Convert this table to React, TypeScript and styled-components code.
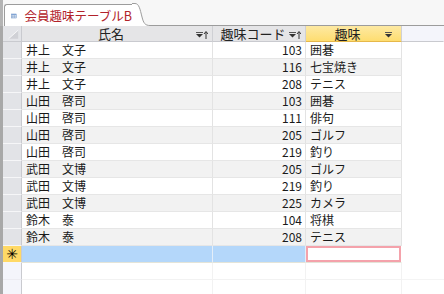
import React from 'react';
import styled, { createGlobalStyle } from 'styled-components';

const GlobalStyle = createGlobalStyle`
    html, body {
        margin: 0;
        padding: 0;
        background: #ffffff;
    }
    body {
        font-family: 'Noto Sans CJK JP', 'Noto Sans', sans-serif;
    }
`;

const Page = styled.div`
    width: 444px;
    height: 294px;
    overflow: hidden;
    display: flex;
    flex-direction: column;
    background: #ffffff;
`;

const TabBar = styled.div`
    display: flex;
    align-items: flex-end;
    height: 26px;
    flex-shrink: 0;
    background: #f7f7f7;
    border-left: 3px solid #b4b4b4;
    box-sizing: border-box;
`;

const Tab = styled.div`
    display: flex;
    align-items: center;
    gap: 8px;
    height: 22px;
    width: 128px;
    padding-left: 6px;
    box-sizing: border-box;
    background: #ffffff;
    border: 1px solid #9c9c9c;
    border-bottom: none;
    border-top-left-radius: 3px;
    border-right: none;
    margin-left: 1px;
`;

const TabLabel = styled.span`
    font-size: 12.5px;
    line-height: 14px;
    color: #b2232b;
    white-space: nowrap;
`;

const TabRest = styled.div`
    flex: 1;
    height: 1px;
    background: #9c9c9c;
`;

const Grid = styled.div`
    flex: 1;
    display: flex;
    flex-direction: column;
    border-left: 3px solid #a8a8a8;
`;

const Row = styled.div<{ $h?: number }>`
    display: grid;
    grid-template-columns: 19px 191px 93px 96px 1fr;
    height: ${(p) => p.$h ?? 17}px;
    flex-shrink: 0;
`;

type Tone = 'white' | 'alt' | 'blank';

const rowBg: Record<Tone, string> = {
    white: '#ffffff',
    alt: '#f2f2f2',
    blank: '#ffffff',
};

const Selector = styled.div<{ $kind: 'head' | 'data' | 'new' | 'blank' }>`
    box-sizing: border-box;
    display: flex;
    align-items: center;
    justify-content: center;
    border-right: 1px solid #c9cacf;
    border-bottom: 1px solid ${(p) => (p.$kind === 'head' ? '#c9cacf' : p.$kind === 'blank' ? '#ececf2' : '#f6f6f8')};
    background: ${(p) =>
        p.$kind === 'head' ? '#e3e4e8' : p.$kind === 'data' ? '#e2e3e7' : p.$kind === 'new' ? '#ffd966' : '#f4f5fb'};
    font-family: 'DejaVu Sans', sans-serif;
    font-size: 14px;
    font-weight: 700;
    line-height: 14px;
    color: #000;
`;

const HeadCell = styled.div<{ $active?: boolean; $empty?: boolean }>`
    box-sizing: border-box;
    position: relative;
    display: flex;
    align-items: center;
    justify-content: center;
    padding-right: 12px;
    font-size: 13px;
    line-height: 15px;
    color: #222;
    border-right: 1px solid ${(p) => (p.$empty ? 'transparent' : '#cfd0d4')};
    border-bottom: 1px solid ${(p) => (p.$active ? '#e6b84a' : '#c9cacf')};
    background: ${(p) =>
        p.$active
            ? 'linear-gradient(#fde9a3, #fedd70)'
            : p.$empty
            ? '#f4f5fb'
            : '#e5e5e7'};
`;

const HeadIcon = styled.svg`
    position: absolute;
    right: 4px;
    top: 5px;
`;

const Cell = styled.div<{ $tone: Tone; $num?: boolean }>`
    box-sizing: border-box;
    display: flex;
    align-items: center;
    justify-content: ${(p) => (p.$num ? 'flex-end' : 'flex-start')};
    padding: ${(p) => (p.$num ? '0 3px 0 0' : '0 0 0 4px')};
    font-size: 12px;
    line-height: 14px;
    color: #1a1a1a;
    white-space: nowrap;
    background: ${(p) => rowBg[p.$tone]};
    border-right: 1px solid ${(p) => (p.$tone === 'blank' ? '#f2f2f2' : '#e3e3e3')};
    border-bottom: 1px solid ${(p) => (p.$tone === 'blank' ? '#f2f2f2' : '#e6e6e6')};
`;

const TailCell = styled.div<{ $tone: Tone }>`
    background: #ffffff;
    border-bottom: 1px solid ${(p) => (p.$tone === 'blank' ? '#f4f4f4' : '#ffffff')};
`;

const NewCell = styled.div<{ $focus?: boolean }>`
    box-sizing: border-box;
    background: ${(p) => (p.$focus ? '#ffffff' : '#b4d7fa')};
    border-right: 1px solid ${(p) => (p.$focus ? 'transparent' : '#e4eef8')};
    border-bottom: 1px solid #e4e4d8;
    box-shadow: ${(p) => (p.$focus ? 'inset 0 0 0 2px #f4a2ab' : 'none')};
`;

const TableIcon = () => (
    <svg width="15" height="12" viewBox="0 0 15 12">
        <rect x="0.5" y="0.5" width="14" height="11" fill="#ffffff" stroke="#4a78b8" />
        <rect x="1" y="1" width="13" height="2.5" fill="#6f98cf" />
        <line x1="0.5" y1="6" x2="14.5" y2="6" stroke="#4a78b8" />
        <line x1="0.5" y1="8.8" x2="14.5" y2="8.8" stroke="#4a78b8" />
        <line x1="5" y1="3.5" x2="5" y2="11.5" stroke="#4a78b8" />
        <line x1="10" y1="3.5" x2="10" y2="11.5" stroke="#4a78b8" />
    </svg>
);

const TabCurve = () => (
    <svg width="18" height="23" viewBox="0 0 18 23" style={{ display: 'block' }}>
        <path d="M0 23 L0 0.5 L3 0.5 C7 0.5 8 6 10 14 C11.5 20 13 22.5 18 22.5 L18 23 Z" fill="#ffffff" />
        <path d="M0 0.5 L3 0.5 C7 0.5 8 6 10 14 C11.5 20 13 22.5 18 22.5" fill="none" stroke="#9c9c9c" />
    </svg>
);

const SortIcon = ({ sorted }: { sorted?: boolean }) => (
    <HeadIcon width="12" height="8" viewBox="0 0 12 8">
        <line x1="0" y1="1.5" x2="7" y2="1.5" stroke="#555" />
        <path d="M0 3 L7 3 L3.5 6.5 Z" fill="#333" />
        {sorted && (
            <>
                <line x1="10" y1="1" x2="10" y2="8" stroke="#333" />
                <path d="M8 3 L10 0.5 L12 3" fill="none" stroke="#333" />
            </>
        )}
    </HeadIcon>
);

const CornerMark = () => (
    <svg width="19" height="15" viewBox="0 0 19 15">
        <path d="M6 13 L16 4 L16 13 Z" fill="#d0d1d6" />
        <path d="M6 13 L16 4" stroke="#ffffff" strokeWidth="0.8" />
    </svg>
);

const rows: [string, number, string][] = [
    ['井上　文子', 103, '囲碁'],
    ['井上　文子', 116, '七宝焼き'],
    ['井上　文子', 208, 'テニス'],
    ['山田　啓司', 103, '囲碁'],
    ['山田　啓司', 111, '俳句'],
    ['山田　啓司', 205, 'ゴルフ'],
    ['山田　啓司', 219, '釣り'],
    ['武田　文博', 205, 'ゴルフ'],
    ['武田　文博', 219, '釣り'],
    ['武田　文博', 225, 'カメラ'],
    ['鈴木　泰', 104, '将棋'],
    ['鈴木　泰', 208, 'テニス'],
];

const App: React.FC = () => {
    return (
        <>
            <GlobalStyle />
            <Page>
                <TabBar>
                    <Tab>
                        <TableIcon />
                        <TabLabel>会員趣味テーブルB</TabLabel>
                    </Tab>
                    <TabCurve />
                    <TabRest />
                </TabBar>
                <Grid>
                    <Row $h={16}>
                        <Selector $kind="head">
                            <CornerMark />
                        </Selector>
                        <HeadCell>
                            氏名
                            <SortIcon sorted />
                        </HeadCell>
                        <HeadCell>
                            趣味コード
                            <SortIcon sorted />
                        </HeadCell>
                        <HeadCell $active>
                            趣味
                            <SortIcon />
                        </HeadCell>
                        <HeadCell $empty />
                    </Row>
                    {rows.map(([name, code, hobby], i) => {
                        const tone: Tone = i % 2 === 0 ? 'white' : 'alt';
                        return (
                            <Row key={i}>
                                <Selector $kind="data" />
                                <Cell $tone={tone}>{name}</Cell>
                                <Cell $tone={tone} $num>
                                    {code}
                                </Cell>
                                <Cell $tone={tone}>{hobby}</Cell>
                                <TailCell $tone={tone} />
                            </Row>
                        );
                    })}
                    <Row>
                        <Selector $kind="new">✳</Selector>
                        <NewCell />
                        <NewCell />
                        <NewCell $focus />
                        <TailCell $tone="white" />
                    </Row>
                    {[0, 1, 2].map((i) => (
                        <Row key={`b${i}`}>
                            <Selector $kind="blank" />
                            <Cell $tone="blank" />
                            <Cell $tone="blank" />
                            <Cell $tone="blank" />
                            <TailCell $tone="blank" />
                        </Row>
                    ))}
                </Grid>
            </Page>
        </>
    );
};

export default App;
